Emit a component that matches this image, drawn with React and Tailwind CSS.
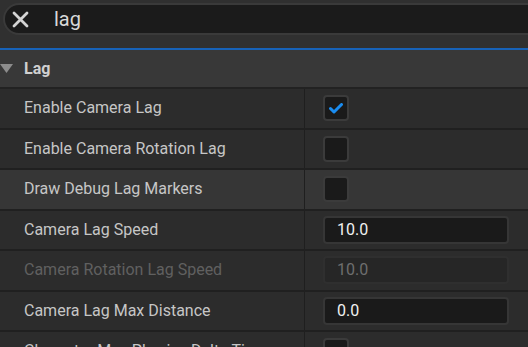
import React from 'react';

const rows = [
  { label: 'Enable Camera Lag', type: 'check', checked: true },
  { label: 'Enable Camera Rotation Lag', type: 'check' },
  { label: 'Draw Debug Lag Markers', type: 'check', hover: true },
  { label: 'Camera Lag Speed', type: 'num', value: '10.0' },
  { label: 'Camera Rotation Lag Speed', type: 'num', value: '10.0', disabled: true },
  { label: 'Camera Lag Max Distance', type: 'num', value: '0.0' },
  { label: 'Character Max Physics Delta Time', type: 'check' },
];

function CheckBox({ checked }) {
  return (
    <div className="w-[26px] h-[26px] rounded-[4px] bg-[#1a1a1a] border-2 border-[#3b3b3b] flex items-center justify-center">
      {checked && (
        <svg width="14" height="11" viewBox="0 0 14 11">
          <path d="M1.5 5.5 L5 9 L12.5 1.5" fill="none" stroke="#1a8cf0" strokeWidth="3" strokeLinecap="round" strokeLinejoin="round" />
        </svg>
      )}
    </div>
  );
}

function NumBox({ value, disabled }) {
  return (
    <div className={`w-[186px] h-[28px] rounded-[4px] border-2 flex items-center pl-[12px] text-[16px] ${disabled ? 'bg-[#262626] border-[#2f2f2f] text-[#6e6e6e]' : 'bg-[#1a1a1a] border-[#363636] text-[#f0f0f0]'}`}>
      {value}
    </div>
  );
}

export default function App() {
  return (
    <div className="w-[528px] h-[347px] overflow-hidden bg-[#2c2c2c] font-['Roboto',sans-serif]">
      {/* search bar */}
      <div className="h-[48px] bg-[#303030] pt-[3px] pl-[3px]">
        <div className="h-[32px] w-[560px] rounded-full bg-[#1b1b1b] border-2 border-[#3a3a3a] flex items-center pl-[7px]">
          <svg width="17" height="17" viewBox="0 0 17 17">
            <path d="M2 2 L15 15 M15 2 L2 15" stroke="#d4d4d4" strokeWidth="2.8" strokeLinecap="round" />
          </svg>
          <span className="ml-[25px] text-[20px] text-[#d8d8d8] leading-none">lag</span>
        </div>
      </div>
      <div className="h-[2px] bg-[#1762b8]" />

      {/* category header */}
      <div className="h-[39px] bg-[#383838] border-b-2 border-[#222222] flex items-center">
        <svg width="13" height="9" viewBox="0 0 13 9" className="ml-0">
          <path d="M0 0 H13 L6.5 9 Z" fill="#8c8c8c" />
        </svg>
        <span className="ml-[11px] text-[16px] font-bold text-[#d0d0d0]">Lag</span>
      </div>

      {rows.map((r, i) => (
        <div key={i} className={`h-[40.5px] border-b-2 border-[#202020] flex ${r.hover ? 'bg-[#363636]' : 'bg-[#2c2c2c]'}`}>
          <div className={`w-[305px] shrink-0 border-r border-[#1f1f1f] flex items-center pl-[24px] text-[16px] whitespace-nowrap overflow-hidden ${r.disabled ? 'text-[#606060]' : 'text-[#c6c6c6]'}`}>
            {r.label}
          </div>
          <div className="flex-1 flex items-center pl-[18px]">
            {r.type === 'check' ? <CheckBox checked={r.checked} /> : <NumBox value={r.value} disabled={r.disabled} />}
          </div>
        </div>
      ))}
    </div>
  );
}
